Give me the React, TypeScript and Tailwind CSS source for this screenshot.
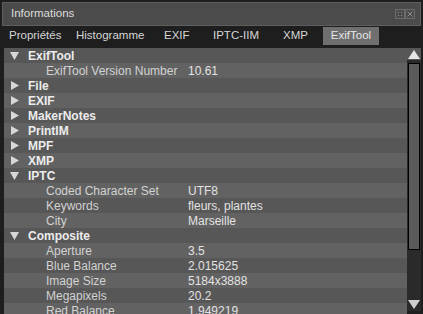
import React from "react";

type Row = { label: string; value?: string; header?: boolean; open?: boolean };

const rows: Row[] = [
  { label: "ExifTool", header: true, open: true },
  { label: "ExifTool Version Number", value: "10.61" },
  { label: "File", header: true },
  { label: "EXIF", header: true },
  { label: "MakerNotes", header: true },
  { label: "PrintIM", header: true },
  { label: "MPF", header: true },
  { label: "XMP", header: true },
  { label: "IPTC", header: true, open: true },
  { label: "Coded Character Set", value: "UTF8" },
  { label: "Keywords", value: "fleurs, plantes" },
  { label: "City", value: "Marseille" },
  { label: "Composite", header: true, open: true },
  { label: "Aperture", value: "3.5" },
  { label: "Blue Balance", value: "2.015625" },
  { label: "Image Size", value: "5184x3888" },
  { label: "Megapixels", value: "20.2" },
  { label: "Red Balance", value: "1.949219" },
];

// tab widths taken from the reference spacing
const tabs = [
  { label: "Propriétés", w: "w-[67px]" },
  { label: "Histogramme", w: "w-[88px]" },
  { label: "EXIF", w: "w-[49px]" },
  { label: "IPTC-IIM", w: "w-[70px]" },
  { label: "XMP", w: "w-[40px]" },
];

function Caret({ open }: { open?: boolean }) {
  return (
    <svg width="9" height="9" viewBox="0 0 9 9" className="shrink-0">
      {open ? (
        <polygon points="0,1 9,1 4.5,9" fill="#d8d8d8" />
      ) : (
        <polygon points="1,0 9,4.5 1,9" fill="#d8d8d8" />
      )}
    </svg>
  );
}

function TitleIcon({ cross }: { cross?: boolean }) {
  return (
    <svg width="10" height="10" viewBox="0 0 10 10">
      <rect x="0.5" y="0.5" width="9" height="9" fill="none" stroke="#8c8c8c" strokeDasharray="1 1" />
      {cross ? (
        <path d="M2.5 2.5 L7.5 7.5 M7.5 2.5 L2.5 7.5" stroke="#8c8c8c" />
      ) : (
        <path d="M3 3.5h1M6 3.5h1M3 6.5h1M6 6.5h1" stroke="#8c8c8c" />
      )}
    </svg>
  );
}

export default function App() {
  return (
    <div
      className="w-[423px] h-[314px] bg-[#1e1e1e] flex flex-col overflow-hidden text-[12px]"
      style={{ fontFamily: "'Liberation Sans', Arial, sans-serif" }}
    >
      {/* Title bar */}
      <div className="mx-[2px] mt-[2px] h-[24px] shrink-0 border border-[#5e5e5e] bg-[#4b4b4b] flex items-center justify-between pl-[8px] pr-[5px]">
        <span className="text-[11.5px] text-[#dcdcdc]">Informations</span>
        <div className="flex gap-[0px]">
          <TitleIcon />
          <TitleIcon cross />
        </div>
      </div>

      {/* Tabs */}
      <div className="mt-[1px] h-[18px] shrink-0 flex items-stretch pl-[9px] text-[11.5px] text-[#d6d6d6]">
        {tabs.map((t) => (
          <div key={t.label} className={`flex items-center shrink-0 ${t.w}`}>
            {t.label}
          </div>
        ))}
        <div className="flex items-center w-[56px] justify-center bg-[#6f6f6f] text-[#e6e6e6]">
          ExifTool
        </div>
      </div>

      {/* Content */}
      <div className="mt-[3px] ml-[4px] mr-[2px] flex-1 flex min-h-0">
        <div className="flex-1 flex flex-col overflow-hidden">
          {rows.map((r, i) => (
            <div
              key={r.label}
              className={`h-[15px] shrink-0 flex items-center ${
                i % 2 === 0 ? "bg-[#575757]" : "bg-[#626262]"
              }`}
            >
              {r.header ? (
                <div className="flex items-center pl-[6px] gap-[9px]">
                  <Caret open={r.open} />
                  <span className="font-bold text-[#ececec]">{r.label}</span>
                </div>
              ) : (
                <>
                  <span className="pl-[42px] w-[184px] shrink-0 text-[#d2d2d2] whitespace-nowrap">
                    {r.label}
                  </span>
                  <span className="text-[#e2e2e2]">{r.value}</span>
                </>
              )}
            </div>
          ))}
        </div>

        {/* Scrollbar */}
        <div className="w-[14px] shrink-0 bg-[#2a2a2a] flex flex-col items-center mb-[3px]">
          <svg width="14" height="12" viewBox="0 0 14 12" className="shrink-0 bg-[#575757]">
            <polygon points="1,11 13,11 7,2" fill="#e4e4e4" />
          </svg>
          <div className="mt-[3px] w-[12px] h-[187px] border border-black bg-[#5a5a5a]" />
          <div className="flex-1" />
          <svg width="14" height="12" viewBox="0 0 14 12" className="shrink-0">
            <polygon points="1,1 13,1 7,10" fill="#d0d0d0" />
          </svg>
        </div>
      </div>
    </div>
  );
}
